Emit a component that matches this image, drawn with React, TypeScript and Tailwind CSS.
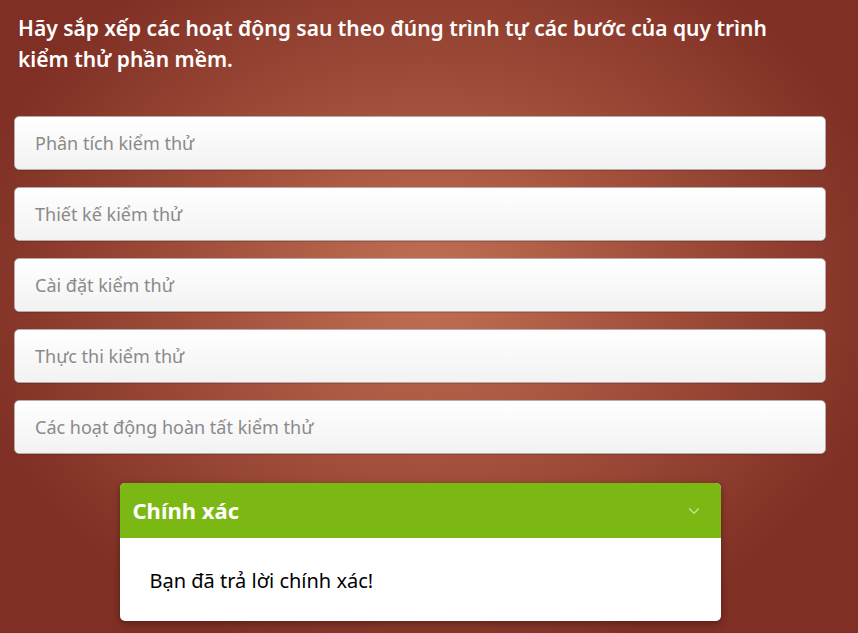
import { ChevronDown } from 'lucide-react'

const steps = [
  'Phân tích kiểm thử',
  'Thiết kế kiểm thử',
  'Cài đặt kiểm thử',
  'Thực thi kiểm thử',
  'Các hoạt động hoàn tất kiểm thử',
]

export default function App() {
  return (
    <div
      className="min-h-[633px] w-full overflow-hidden bg-[radial-gradient(ellipse_55%_60%_at_50%_45%,#c27155_0%,#a4523d_45%,#7f2f24_100%)] px-[14px] pt-[13px] pb-4"
      style={{ fontFamily: '"Noto Sans", "Open Sans", sans-serif' }}
    >
      <div className="w-[812px]">
        {/* Question */}
        <h1 className="px-1 text-[21px] leading-[31px] font-semibold text-white max-w-[790px]">
          Hãy sắp xếp các hoạt động sau theo đúng trình tự các bước của quy trình kiểm thử phần mềm.
        </h1>

        {/* Sortable items */}
        <div className="mt-[41px] flex flex-col gap-[17px]">
          {steps.map((step) => (
            <div
              key={step}
              className="h-[54px] flex items-center rounded-[5px] border border-[#b8aaa6] bg-[linear-gradient(#ffffff,#f2f2f2)] px-5 text-[18px] text-[#8a8a8a] shadow-[0_1px_1px_rgba(0,0,0,0.15)]"
            >
              {step}
            </div>
          ))}
        </div>

        {/* Feedback */}
        <div className="mx-auto mt-[29px] w-[601px] overflow-hidden rounded-[5px] bg-white shadow-[0_2px_6px_rgba(0,0,0,0.35)]">
          <div className="flex h-[55px] items-center justify-between bg-[#7cb814] pl-[13px] pr-[18px]">
            <span className="text-[22px] font-bold text-white">Chính xác</span>
            <ChevronDown className="h-[18px] w-[18px] text-[#c8e6a0]" strokeWidth={1.5} />
          </div>
          <div className="px-[30px] pt-[28px] pb-[25px] text-[20px] text-black">Bạn đã trả lời chính xác!</div>
        </div>
      </div>
    </div>
  )
}
